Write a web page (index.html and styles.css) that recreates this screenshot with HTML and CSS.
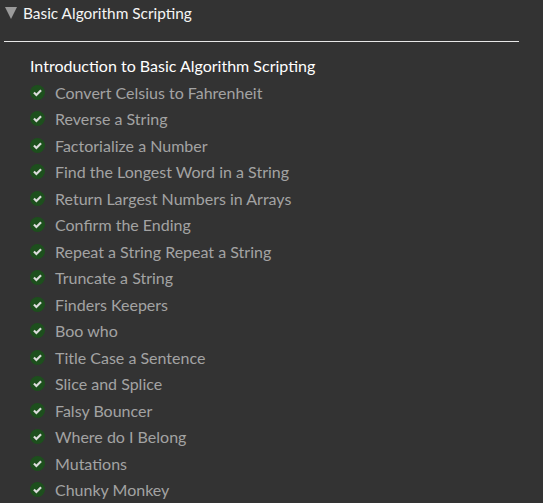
FILE: index.html
```html
<!DOCTYPE html>
<html>
<head>
<meta charset="utf-8">
<link rel="stylesheet" href="styles.css">
</head>
<body>
<div class="block">
  <div class="block-head"><span class="caret"></span><span class="block-title">Basic Algorithm Scripting</span></div>
  <hr class="divider">
  <div class="section">
    <h3 class="section-title">Introduction to Basic Algorithm Scripting</h3>
    <ul class="list">
      <li class="item"><svg class="check" viewBox="0 0 16 16"><circle cx="8" cy="8" r="8" fill="#1d4f1d"/><path d="M4.2 8.1l2.6 2.6 5-5.1" fill="none" stroke="#dcdcdc" stroke-width="2.3"/></svg><span>Convert Celsius to Fahrenheit</span></li>
      <li class="item"><svg class="check" viewBox="0 0 16 16"><circle cx="8" cy="8" r="8" fill="#1d4f1d"/><path d="M4.2 8.1l2.6 2.6 5-5.1" fill="none" stroke="#dcdcdc" stroke-width="2.3"/></svg><span>Reverse a String</span></li>
      <li class="item"><svg class="check" viewBox="0 0 16 16"><circle cx="8" cy="8" r="8" fill="#1d4f1d"/><path d="M4.2 8.1l2.6 2.6 5-5.1" fill="none" stroke="#dcdcdc" stroke-width="2.3"/></svg><span>Factorialize a Number</span></li>
      <li class="item"><svg class="check" viewBox="0 0 16 16"><circle cx="8" cy="8" r="8" fill="#1d4f1d"/><path d="M4.2 8.1l2.6 2.6 5-5.1" fill="none" stroke="#dcdcdc" stroke-width="2.3"/></svg><span>Find the Longest Word in a String</span></li>
      <li class="item"><svg class="check" viewBox="0 0 16 16"><circle cx="8" cy="8" r="8" fill="#1d4f1d"/><path d="M4.2 8.1l2.6 2.6 5-5.1" fill="none" stroke="#dcdcdc" stroke-width="2.3"/></svg><span>Return Largest Numbers in Arrays</span></li>
      <li class="item"><svg class="check" viewBox="0 0 16 16"><circle cx="8" cy="8" r="8" fill="#1d4f1d"/><path d="M4.2 8.1l2.6 2.6 5-5.1" fill="none" stroke="#dcdcdc" stroke-width="2.3"/></svg><span>Confirm the Ending</span></li>
      <li class="item"><svg class="check" viewBox="0 0 16 16"><circle cx="8" cy="8" r="8" fill="#1d4f1d"/><path d="M4.2 8.1l2.6 2.6 5-5.1" fill="none" stroke="#dcdcdc" stroke-width="2.3"/></svg><span>Repeat a String Repeat a String</span></li>
      <li class="item"><svg class="check" viewBox="0 0 16 16"><circle cx="8" cy="8" r="8" fill="#1d4f1d"/><path d="M4.2 8.1l2.6 2.6 5-5.1" fill="none" stroke="#dcdcdc" stroke-width="2.3"/></svg><span>Truncate a String</span></li>
      <li class="item"><svg class="check" viewBox="0 0 16 16"><circle cx="8" cy="8" r="8" fill="#1d4f1d"/><path d="M4.2 8.1l2.6 2.6 5-5.1" fill="none" stroke="#dcdcdc" stroke-width="2.3"/></svg><span>Finders Keepers</span></li>
      <li class="item"><svg class="check" viewBox="0 0 16 16"><circle cx="8" cy="8" r="8" fill="#1d4f1d"/><path d="M4.2 8.1l2.6 2.6 5-5.1" fill="none" stroke="#dcdcdc" stroke-width="2.3"/></svg><span>Boo who</span></li>
      <li class="item"><svg class="check" viewBox="0 0 16 16"><circle cx="8" cy="8" r="8" fill="#1d4f1d"/><path d="M4.2 8.1l2.6 2.6 5-5.1" fill="none" stroke="#dcdcdc" stroke-width="2.3"/></svg><span>Title Case a Sentence</span></li>
      <li class="item"><svg class="check" viewBox="0 0 16 16"><circle cx="8" cy="8" r="8" fill="#1d4f1d"/><path d="M4.2 8.1l2.6 2.6 5-5.1" fill="none" stroke="#dcdcdc" stroke-width="2.3"/></svg><span>Slice and Splice</span></li>
      <li class="item"><svg class="check" viewBox="0 0 16 16"><circle cx="8" cy="8" r="8" fill="#1d4f1d"/><path d="M4.2 8.1l2.6 2.6 5-5.1" fill="none" stroke="#dcdcdc" stroke-width="2.3"/></svg><span>Falsy Bouncer</span></li>
      <li class="item"><svg class="check" viewBox="0 0 16 16"><circle cx="8" cy="8" r="8" fill="#1d4f1d"/><path d="M4.2 8.1l2.6 2.6 5-5.1" fill="none" stroke="#dcdcdc" stroke-width="2.3"/></svg><span>Where do I Belong</span></li>
      <li class="item"><svg class="check" viewBox="0 0 16 16"><circle cx="8" cy="8" r="8" fill="#1d4f1d"/><path d="M4.2 8.1l2.6 2.6 5-5.1" fill="none" stroke="#dcdcdc" stroke-width="2.3"/></svg><span>Mutations</span></li>
      <li class="item"><svg class="check" viewBox="0 0 16 16"><circle cx="8" cy="8" r="8" fill="#1d4f1d"/><path d="M4.2 8.1l2.6 2.6 5-5.1" fill="none" stroke="#dcdcdc" stroke-width="2.3"/></svg><span>Chunky Monkey</span></li>
    </ul>
  </div>
</div>
</body>
</html>
```

FILE: styles.css
```css
html, body {
  margin: 0;
  padding: 0;
  background: #333333;
  font-family: Lato, "Open Sans", sans-serif;
  overflow: hidden;
}
.block {
  padding: 0 24px 0 4px;
}
.block-head {
  display: flex;
  align-items: center;
  height: 26px;
  color: #f5f5f5;
  font-size: 15.4px;
}
.caret {
  width: 0;
  height: 0;
  border-left: 6px solid transparent;
  border-right: 6px solid transparent;
  border-top: 12px solid #9a9a9a;
  margin: 0 6px 0 1px;
}
.divider {
  border: none;
  border-top: 1px solid #e8e8e8;
  margin: 15px 0 0 0;
}
.section {
  padding: 11px 0 0 26px;
}
.section-title {
  margin: 0;
  font-size: 16px;
  font-weight: normal;
  color: #ffffff;
  line-height: 26px;
}
.list {
  list-style: none;
  margin: 0;
  padding: 0;
}
.item {
  display: flex;
  align-items: center;
  height: 26.5px;
  color: #a3a3a3;
  font-size: 16px;
}
.check {
  width: 15px;
  height: 15px;
  margin: 0 10px 0 0;
  flex: none;
}
```
